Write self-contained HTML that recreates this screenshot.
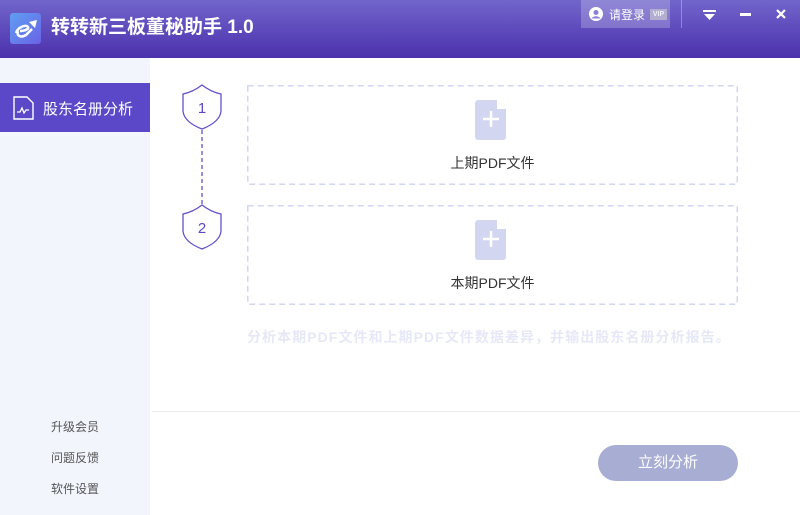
<!DOCTYPE html>
<html><head><meta charset="utf-8"><style>
*{margin:0;padding:0;box-sizing:border-box}
body{width:800px;height:515px;position:relative;overflow:hidden;background:#fff;font-family:"Liberation Sans","Noto Sans CJK SC",sans-serif}
.hdr{position:absolute;left:0;top:0;width:800px;height:58px;background:linear-gradient(#7165cb,#4c31ad)}
.logo{position:absolute;left:10px;top:13px;width:31px;height:31px;border-radius:3px;background:linear-gradient(135deg,#5f9ff2,#6a62e6)}
.title{position:absolute;left:51px;top:15px;color:#fff;font-size:19px;font-weight:bold;line-height:26px}
.login{position:absolute;left:581px;top:0;width:89px;height:28px;background:rgba(255,255,255,.22)}
.login span{position:absolute;left:28px;top:6px;color:#fff;font-size:12px}
.vip{position:absolute;left:650px;top:9px;width:17px;height:11px;background:#b3aed0;color:#efeefa;font-size:7px;font-weight:bold;text-align:center;line-height:11px}
.sep{position:absolute;left:681px;top:0;width:1px;height:28px;background:rgba(255,255,255,.3)}
.side{position:absolute;left:0;top:58px;width:150px;height:457px;background:#f3f5fd}
.act{position:absolute;left:0;top:83px;width:150px;height:49px;background:#5a48c8}
.act span{position:absolute;left:43px;top:15px;color:#fff;font-size:15px}
.sl{position:absolute;left:51px;font-size:12px;color:#555}
.box{position:absolute;left:247px;width:491px;height:100px}
.box span{position:absolute;left:0;width:100%;top:68px;text-align:center;font-size:14px;color:#333}
.desc{position:absolute;left:247px;top:327px;font-size:14px;font-weight:bold;color:#e6e8f7;letter-spacing:1.05px}
.line{position:absolute;left:152px;top:411px;width:648px;height:1px;background:#ebebeb}
.btn{position:absolute;left:598px;top:445px;width:140px;height:36px;border-radius:18px;background:#a7add3;color:#fff;font-size:15px;text-align:center;line-height:36px}
</style></head><body>
<div class="hdr"></div>
<div class="logo"><svg width="31" height="31"><path d="M6 20c2-6 10-9 12-6 1 2-3 4-8 4M8 18c-2 5 3 7 8 4l6-6" stroke="#fff" stroke-width="2.5" fill="none"/><path d="M19 9l8-2-2 8z" fill="#fff"/></svg></div>
<div class="title">转转新三板董秘助手 1.0</div>
<div class="login"><svg style="position:absolute;left:8px;top:7px" width="14" height="14"><circle cx="7" cy="7" r="7" fill="#fff"/><circle cx="7" cy="5.5" r="2.5" fill="#8a80d4"/><path d="M2.5 11.5c2-3 7-3 9 0" fill="#8a80d4"/></svg><span>请登录</span></div>
<div class="vip">VIP</div>
<div class="sep"></div>
<svg style="position:absolute;left:703px;top:10px" width="14" height="12"><rect x="0" y="0" width="13" height="2" fill="#fff"/><path d="M1 4h11l-5.5 6z" fill="#fff"/></svg>
<div style="position:absolute;left:740px;top:13px;width:11px;height:3px;background:#fff"></div>
<svg style="position:absolute;left:776px;top:9px" width="10" height="10"><path d="M1 1l8 8M9 1l-8 8" stroke="#fff" stroke-width="2.2"/></svg>
<div class="side"></div>
<div class="act"><svg style="position:absolute;left:13px;top:13px" width="22" height="24"><path d="M1 1h13l6 6v16H1z" fill="none" stroke="#fff" stroke-width="1.4"/><path d="M4 16h3l2-4 2 5 2-3h3" fill="none" stroke="#fff" stroke-width="1.3"/></svg><span>股东名册分析</span></div>
<div class="sl" style="top:418px">升级会员</div>
<div class="sl" style="top:449px">问题反馈</div>
<div class="sl" style="top:480px">软件设置</div>
<svg style="position:absolute;left:180px;top:84px" width="44" height="170">
<path d="M22 1Q31 8 41 10V27Q40 38 22 45Q4 38 3 27V10Q13 8 22 1z" fill="#fff" stroke="#6552c9" stroke-width="1.3"/>
<text x="22" y="29" text-anchor="middle" font-size="15" fill="#5a48c8" font-family="Liberation Sans">1</text>
<path d="M22 46v74" stroke="#6552c9" stroke-width="1.3" stroke-dasharray="4 3"/>
<path d="M22 121Q31 128 41 130V147Q40 158 22 165Q4 158 3 147V130Q13 128 22 121z" fill="#fff" stroke="#6552c9" stroke-width="1.3"/>
<text x="22" y="149" text-anchor="middle" font-size="15" fill="#5a48c8" font-family="Liberation Sans">2</text>
</svg>
<div class="box" style="top:85px"><svg style="position:absolute;left:0;top:0" width="491" height="100"><rect x="0.75" y="0.75" width="489.5" height="98.5" fill="none" stroke="#d3d6ef" stroke-width="1.5" stroke-dasharray="6 4"/></svg><svg style="position:absolute;left:228px;top:15px" width="32" height="40"><path d="M3 0h19l9 9v28a3 3 0 0 1-3 3H3a3 3 0 0 1-3-3V3a3 3 0 0 1 3-3z" fill="#d3d6f0"/><path d="M16 11v16M8 19h16" stroke="#fff" stroke-width="2.5"/><path d="M22 0v9h9" fill="#fff"/></svg><span>上期PDF文件</span></div>
<div class="box" style="top:205px"><svg style="position:absolute;left:0;top:0" width="491" height="100"><rect x="0.75" y="0.75" width="489.5" height="98.5" fill="none" stroke="#d3d6ef" stroke-width="1.5" stroke-dasharray="6 4"/></svg><svg style="position:absolute;left:228px;top:15px" width="32" height="40"><path d="M3 0h19l9 9v28a3 3 0 0 1-3 3H3a3 3 0 0 1-3-3V3a3 3 0 0 1 3-3z" fill="#d3d6f0"/><path d="M16 11v16M8 19h16" stroke="#fff" stroke-width="2.5"/><path d="M22 0v9h9" fill="#fff"/></svg><span>本期PDF文件</span></div>
<div class="desc">分析本期PDF文件和上期PDF文件数据差异，并输出股东名册分析报告。</div>
<div class="line"></div>
<div class="btn">立刻分析</div>
</body></html>
